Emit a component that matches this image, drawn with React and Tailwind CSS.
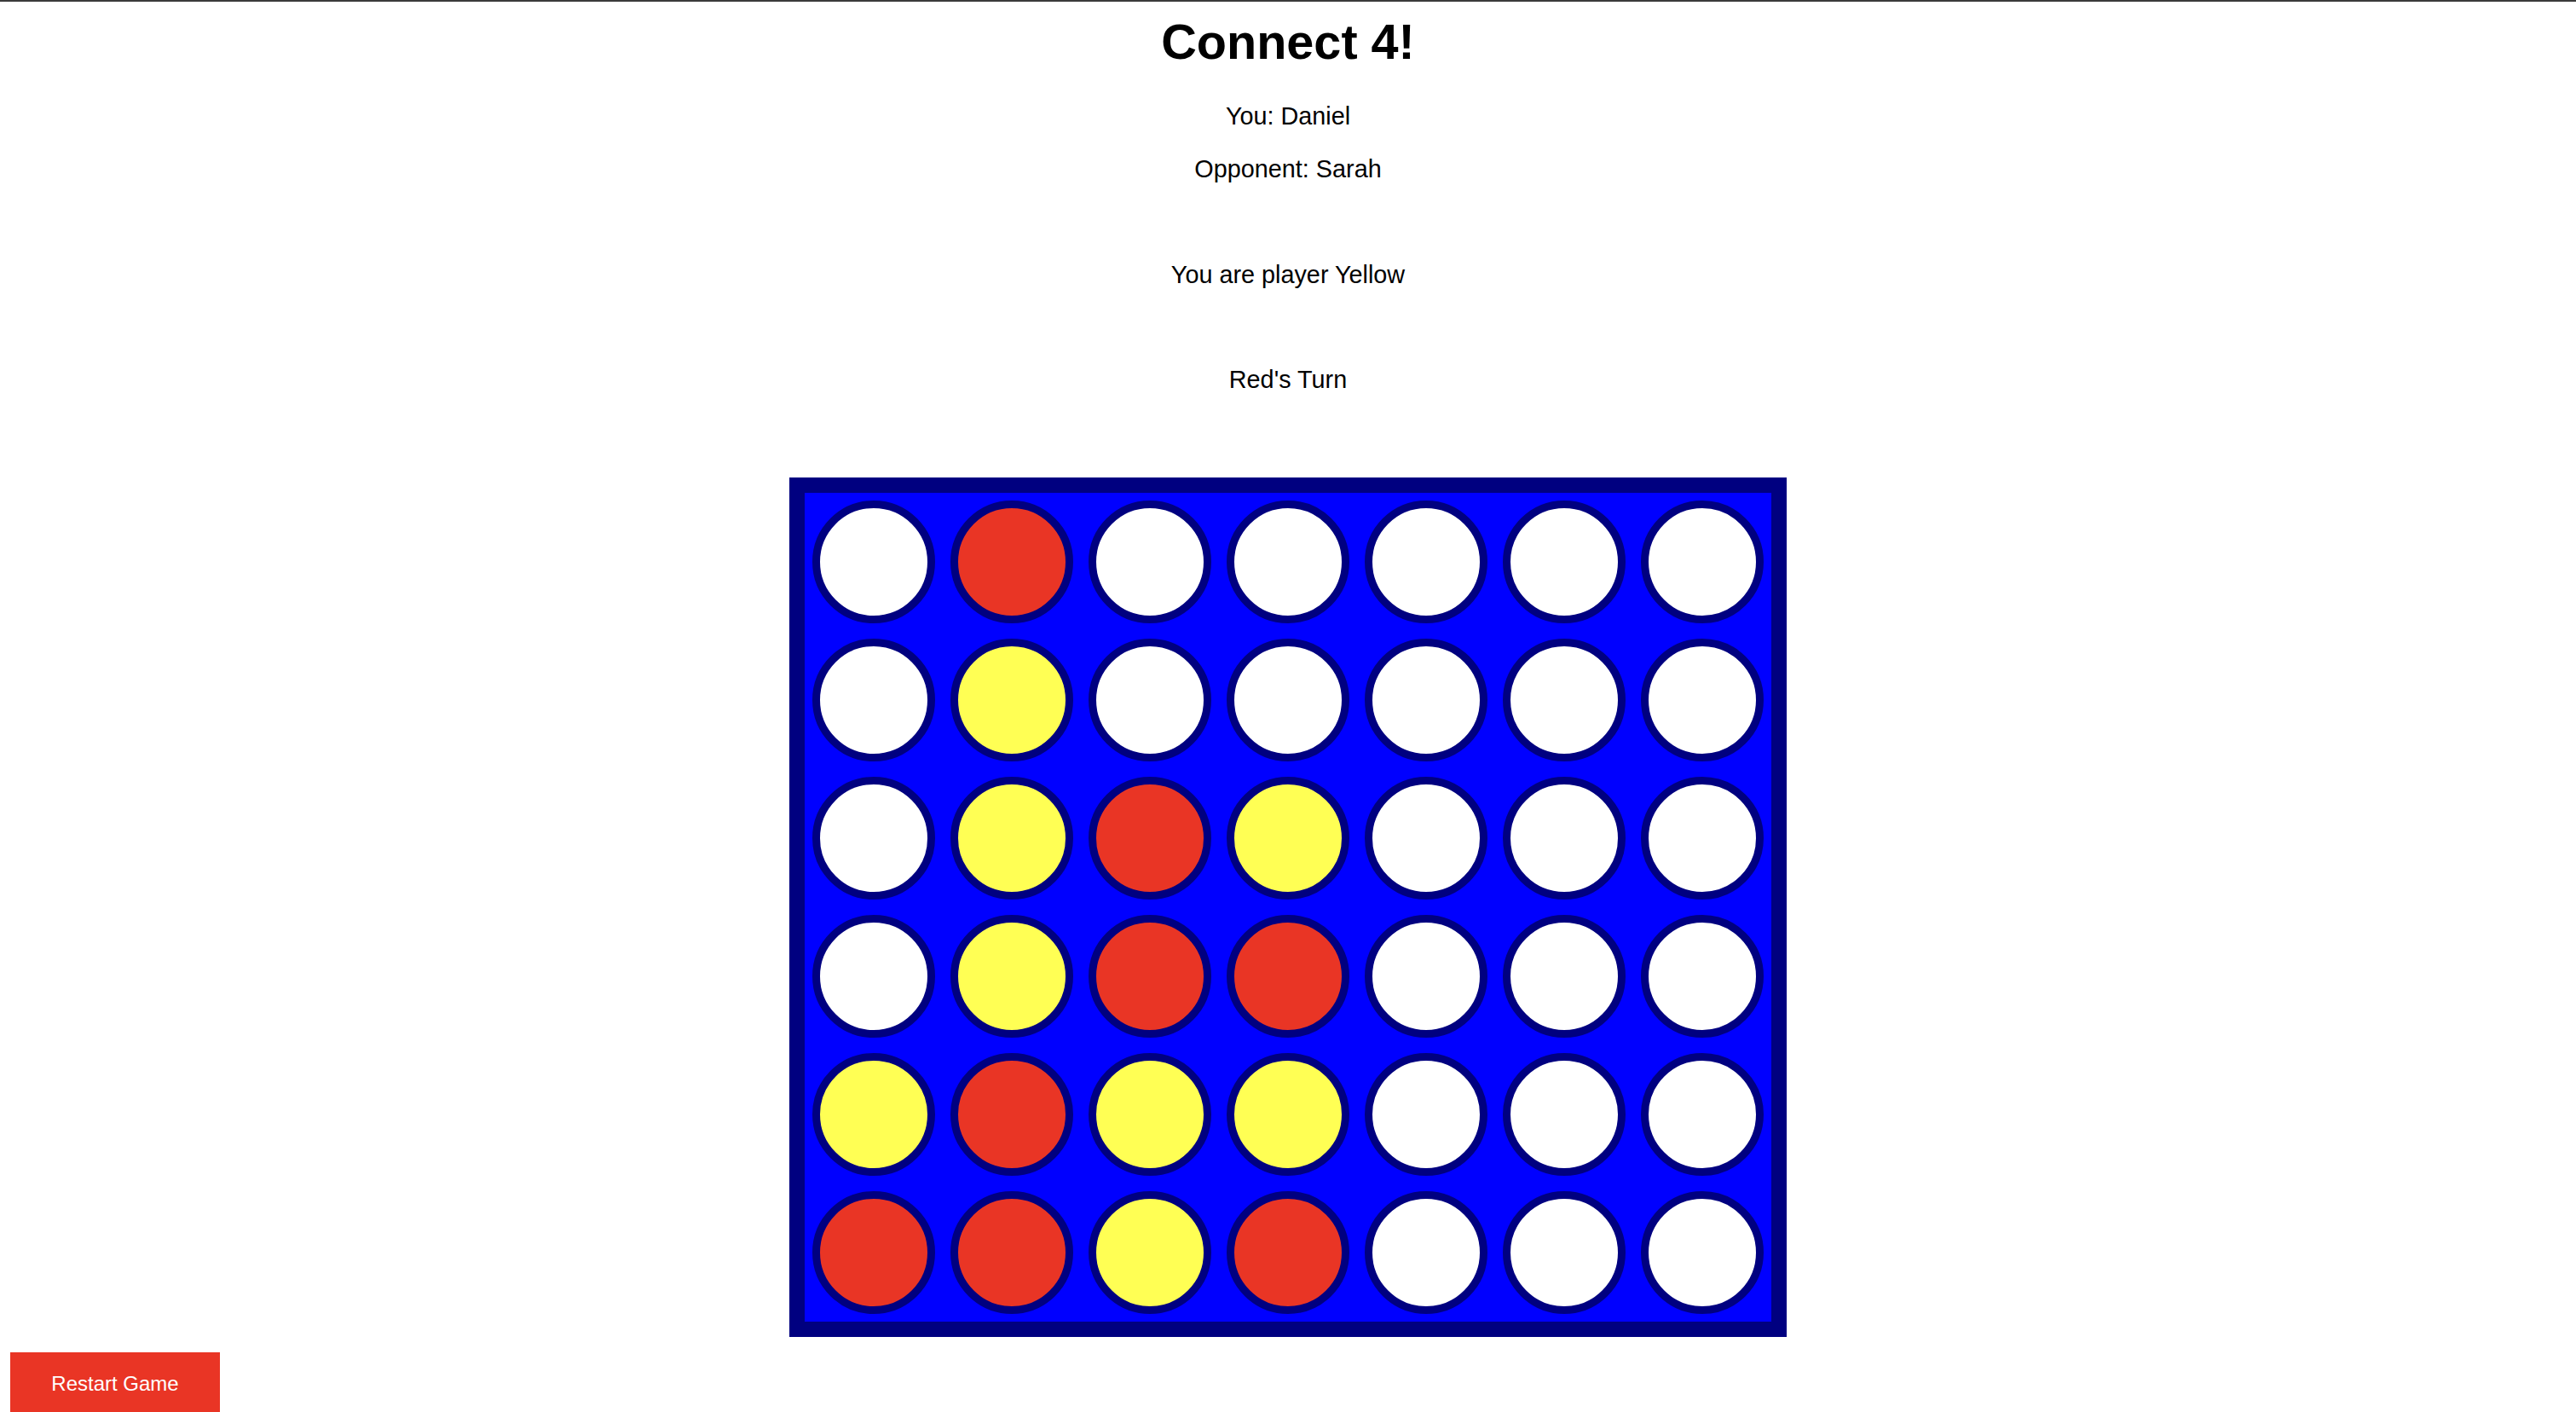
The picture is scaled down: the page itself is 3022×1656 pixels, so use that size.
import React from "react";

const W = "w", R = "r", Y = "y";
const board = [
  [W, R, W, W, W, W, W],
  [W, Y, W, W, W, W, W],
  [W, Y, R, Y, W, W, W],
  [W, Y, R, R, W, W, W],
  [Y, R, Y, Y, W, W, W],
  [R, R, Y, R, W, W, W],
];

const fill = {
  w: "bg-white",
  r: "bg-[#e93525]",
  y: "bg-[#ffff54]",
};

export default function App() {
  return (
    <div className="min-h-screen border-t-2 border-[#3a3a3a] bg-white text-black font-['Liberation_Sans',Arial,sans-serif]">
      <div className="flex flex-col items-center text-center">
        <h1 className="mt-[14px] text-[57.6px] font-bold leading-[66px]">Connect 4!</h1>
        <p className="mt-[38px] text-[28.8px] leading-[33px]">You: Daniel</p>
        <p className="mt-[29px] text-[28.8px] leading-[33px]">Opponent: Sarah</p>
        <p className="mt-[91px] text-[28.8px] leading-[33px]">You are player Yellow</p>
        <p className="mt-[90px] text-[28.8px] leading-[33px]">Red's Turn</p>
        <div className="mt-[98px] border-[18px] border-[#000080] bg-[#0000ff] grid grid-cols-7">
          {board.flat().map((c, i) => (
            <div key={i} className="w-[162px] h-[162px] flex items-center justify-center">
              <div className={`w-[144px] h-[144px] rounded-full border-[9px] border-[#000080] ${fill[c]}`} />
            </div>
          ))}
        </div>
      </div>
      <div className="mt-[18px] pl-[12px]">
        <button className="w-[246px] h-[74px] bg-[#e93525] text-white text-[24px] flex items-center justify-center">
          Restart Game
        </button>
      </div>
    </div>
  );
}
